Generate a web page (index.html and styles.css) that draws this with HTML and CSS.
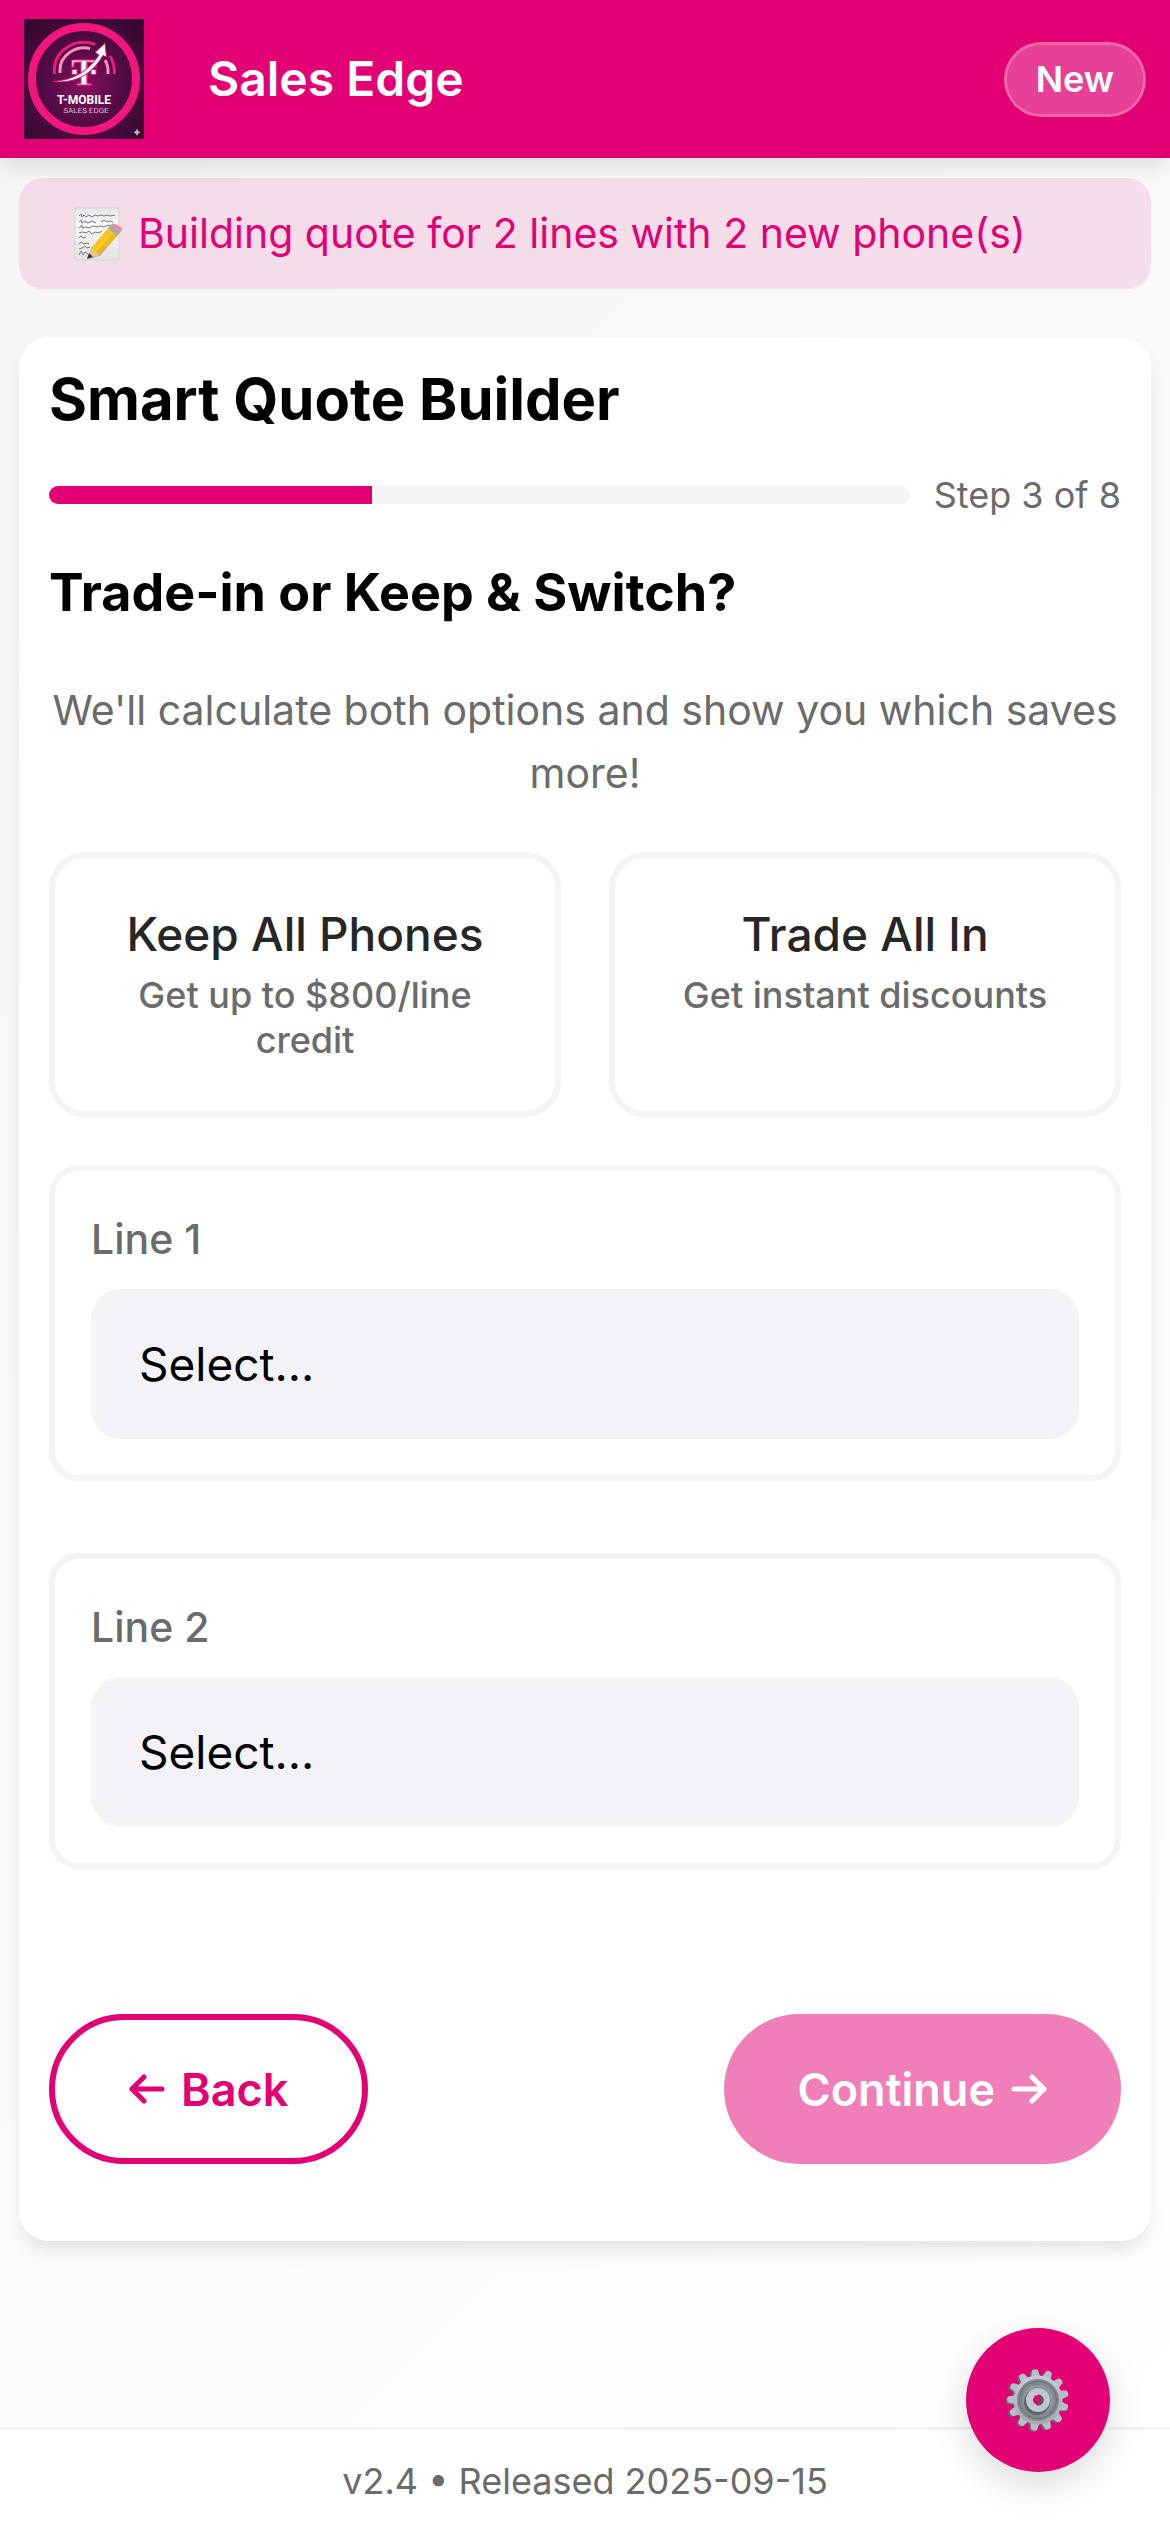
FILE: index.html
```html
<!DOCTYPE html>
<html lang="en">
<head>
<meta charset="utf-8">
<meta name="viewport" content="width=device-width, initial-scale=1">
<title>Sales Edge</title>
<link rel="stylesheet" href="styles.css">
</head>
<body>
<header class="header">
  <svg class="logo" viewBox="0 0 120 120" role="img" aria-label="T-Mobile Sales Edge">
    <defs>
      <radialGradient id="logo-bg" cx="50%" cy="55%" r="65%">
        <stop offset="0" stop-color="#8a0f62"/>
        <stop offset=".45" stop-color="#570b48"/>
        <stop offset="1" stop-color="#35082f"/>
      </radialGradient>
    </defs>
    <rect width="120" height="120" fill="url(#logo-bg)"/>
    <circle cx="60" cy="60" r="52" fill="none" stroke="#f3157e" stroke-width="8"/>
    <path d="M30.500 55V50A29.500 27 0 0 1 71 25.500M86 37Q90.500 44 90.500 55" fill="none" stroke="#e91a7b" stroke-width="3"/>
    <path d="M36 54V51A24.500 22 0 0 1 66 29.500M81 41Q84.500 47 84 55" fill="none" stroke="#ff8fba" stroke-width="3"/>
    <text class="logo-t" x="60" y="66" text-anchor="middle">T</text>
    <path d="M48 50.500h5v5h-5zM67 50.500h5v5h-5z" fill="#fff" stroke="#f3157e"/>
    <path d="M29 62.500C50 61 64 52 75 36L71 33.500L81 24L82.500 38L79 36.500C68 55 52 65 29 62.500Z" fill="#fff" stroke="#d0116f" stroke-width="1"/>
    <text class="logo-name" x="60" y="85" text-anchor="middle">T-MOBILE</text>
    <text class="logo-sub" x="62" y="94" text-anchor="middle">SALES EDGE</text>
    <path d="M113 110.500l1 2 2 .8-2 .9-1 2-1-2-2-.9 2-.8z" fill="#c9a5c0" stroke="#c9a5c0" stroke-width="1"/>
  </svg>
  <h1 class="brand">Sales Edge</h1>
  <button class="new-button" type="button">New</button>
</header>

<main class="main">
  <p class="banner">
    <svg class="memo-icon" viewBox="0 0 50 54" aria-hidden="true">
      <defs>
        <linearGradient id="paper" x1="0" y1="0" x2="0" y2="1"><stop offset="0" stop-color="#e6e6e6"/><stop offset=".3" stop-color="#f8f8f8"/><stop offset="1" stop-color="#e3e3e5"/></linearGradient>
        <linearGradient id="pencil" x1="0" y1="0" x2="1" y2="1"><stop offset="0" stop-color="#ffdb3d"/><stop offset=".5" stop-color="#f7c218"/><stop offset="1" stop-color="#c98a0c"/></linearGradient>
      </defs>
      <rect x="1" y="1" width="44" height="52" fill="url(#paper)" stroke="#d5d3d6"/>
      <g fill="none" stroke="#77777e" stroke-width="1">
        <path d="M5 9l2-2 1 3 2-2 2 2 3-2 3 2 3-2 3 1 3-1 3 1 3-1 3 1 5-1"/>
        <path d="M5 15l2-2 1 3 3-2 3 2 4-2 4 2M27 15l3-2 3 2 3-1 3 1"/>
        <path d="M5 21l3-3v3l3-1 4 1 4-2 4 1 4-1 3 1 5-2 2 2"/>
        <path d="M5 26l3-1 4 1 3-2 3 3 3-2 4 1 3-2"/>
        <path d="M5 31l2-2 2 2 3-1M5 37l2-2 3 2 3-1 2 1M5 42l3-1 3-2 2 2 3-1M5 48l2-4 2 4 2-3 3 2"/>
      </g>
      <path d="M15 52L26 49L49 22L46 20Z" fill="#67656a" opacity=".35"/>
      <path d="M17 41L35 20L44 28L25 48Z" fill="url(#pencil)"/>
      <path d="M21 44L39 24" stroke="#ffe265" stroke-width="1"/>
      <path d="M17 41L25 48L14 51Z" fill="#ebc68b"/>
      <path d="M15 46L19 50L13 52Z" fill="#353237"/>
      <path d="M34 21L37 17.500L46 25L43 29Z" fill="#9faab5"/>
      <path d="M37 17.500C39 14 49 20 47.500 23L46 25Z" fill="#ef8b9b"/>
    </svg>
    <span>Building quote for 2 lines with 2 new phone(s)</span>
  </p>

  <form class="card">
    <h2 class="card-title">Smart Quote Builder</h2>
    <div class="progress">
      <div class="track" role="progressbar" aria-label="Progress" aria-valuemin="0" aria-valuemax="8" aria-valuenow="3"><div class="fill" style="width: 37.5%"></div></div>
      <span class="step">Step 3 of 8</span>
    </div>
    <h3 class="question">Trade-in or Keep &amp; Switch?</h3>
    <p class="intro">We'll calculate both options and show you which saves more!</p>

    <div class="options">
      <button class="option" type="button"><span class="option-title">Keep All Phones</span><span class="option-note">Get up to $800/line credit</span></button>
      <button class="option" type="button"><span class="option-title">Trade All In</span><span class="option-note">Get instant discounts</span></button>
    </div>

    <div class="lines">
      <div class="line">
        <label class="line-label" for="line-1">Line 1</label>
        <select class="select" id="line-1"><option>Select...</option></select>
      </div>
      <div class="line">
        <label class="line-label" for="line-2">Line 2</label>
        <select class="select" id="line-2"><option>Select...</option></select>
      </div>
    </div>

    <div class="actions">
      <button class="action action-back" type="button">
        <svg class="arrow" viewBox="0 0 36 32" aria-hidden="true"><path d="M33 16H3M15 4L3 16L15 28"/></svg>
        Back
      </button>
      <button class="action action-next" type="button" disabled>
        Continue
        <svg class="arrow" viewBox="0 0 36 32" aria-hidden="true"><path d="M3 16H33M21 4L33 16L21 28"/></svg>
      </button>
    </div>
  </form>
</main>

<footer class="footer">v2.4 • Released 2025-09-15</footer>

<button class="settings" type="button" aria-label="Settings">
  <svg class="gear" viewBox="-32 -32 64 64" aria-hidden="true">
    <defs>
      <linearGradient id="steel" x1="0" y1="0" x2="0" y2="1"><stop offset="0" stop-color="#c3ccd4"/><stop offset="1" stop-color="#aaa9b2"/></linearGradient>
      <g id="teeth">
        <path id="tooth" d="M-5 -21L-3 -30Q0 -32 3 -30L5 -21Z"/>
        <use href="#tooth" transform="rotate(27.700)"/><use href="#tooth" transform="rotate(55.400)"/><use href="#tooth" transform="rotate(83.100)"/><use href="#tooth" transform="rotate(110.800)"/><use href="#tooth" transform="rotate(138.500)"/><use href="#tooth" transform="rotate(166.200)"/><use href="#tooth" transform="rotate(193.800)"/><use href="#tooth" transform="rotate(221.500)"/><use href="#tooth" transform="rotate(249.200)"/><use href="#tooth" transform="rotate(276.900)"/><use href="#tooth" transform="rotate(304.600)"/><use href="#tooth" transform="rotate(332.300)"/>
      </g>
    </defs>
    <use href="#teeth" fill="#62666b" transform="translate(-2 1) rotate(-6)"/>
    <use href="#teeth" fill="#b7bec6" transform="rotate(-6)"/>
    <circle r="21.500" fill="none" stroke="url(#steel)" stroke-width="6"/>
    <circle r="15" fill="none" stroke="#80898f" stroke-width="12"/>
    <circle r="18.500" fill="none" stroke="#666f75" stroke-width="1"/>
    <circle r="14" fill="none" stroke="#939ca2" stroke-width="2"/>
    <circle cx="-1" cy="2" r="11" fill="none" stroke="#5c6468" stroke-width="4"/>
    <circle r="8.500" fill="none" stroke="#bec7cf" stroke-width="7"/>
    <path d="M0 -5.500A5.500 5.500 0 1 1 -2 5A7 7 0 0 0 0 -5.500Z" fill="#5d5360"/>
  </svg>
</button>
</body>
</html>
```
FILE: styles.css
```css
:root {
  --magenta: #e20074;
  --grey: #6b6b6b;
  --line: #f4f4f4;
  --shadow: 0 12px 18px -3px rgba(0, 0, 0, .1);
}

* { box-sizing: border-box; }

body {
  margin: 0;
  min-height: 100vh;
  display: flex;
  flex-direction: column;
  background: linear-gradient(135deg, #f5f5f5, #fff);
  color: #000;
  font-family: Inter, "Liberation Sans", sans-serif;
  font-size: 41px;
}

h1, h2, h3, p { margin: 0; }

button, select { font: inherit; }

.header {
  display: flex;
  align-items: center;
  padding: 19px 24px;
  background: var(--magenta);
  color: #fff;
  box-shadow: var(--shadow);
}

.logo { width: 120px; height: 120px; }
.logo-t { font: bold 38px "Liberation Serif", serif; fill: #fff; stroke: #f3157e; stroke-width: 1px; }
.logo-name { font: bold 12px Roboto, sans-serif; fill: #fff; }
.logo-sub { font: 8px Roboto, sans-serif; fill: #d9b8d2; }

.brand {
  margin-left: 64px;
  font-size: 48px;
  line-height: 60px;
  font-weight: 600;
}

.new-button {
  margin-left: auto;
  height: 75px;
  padding: 0 29px;
  border: 3px solid rgba(255, 255, 255, .4);
  border-radius: 38px;
  background: rgba(255, 255, 255, .25);
  background-clip: padding-box;
  color: #fff;
  font-size: 36px;
  font-weight: 600;
}

.main { padding: 20px 19px 0; }

.banner {
  display: flex;
  align-items: center;
  gap: 14px;
  padding: 24px 55px;
  border-radius: 24px;
  background: rgba(226, 0, 116, .1);
  color: var(--magenta);
  line-height: 63px;
}

.memo-icon { width: 50px; height: 54px; }

.card {
  margin-top: 48px;
  padding: 30px 30px 77px;
  border-radius: 30px;
  background: #fff;
  box-shadow: var(--shadow);
}

.card-title {
  font-size: 58px;
  line-height: 64px;
  font-weight: 700;
}

.progress {
  display: flex;
  align-items: center;
  gap: 24px;
  margin-top: 38px;
  color: var(--grey);
  font-size: 36px;
  line-height: 52px;
}

.track {
  flex: 1;
  height: 18px;
  border-radius: 9px;
  overflow: hidden;
  background: var(--line);
}

.fill { height: 100%; background: var(--magenta); }

.question {
  margin-top: 40px;
  font-size: 52px;
  line-height: 64px;
  font-weight: 700;
}

.intro {
  margin-top: 54px;
  color: var(--grey);
  line-height: 63px;
  text-align: center;
}

.options {
  display: grid;
  grid-template-columns: 1fr 1fr;
  gap: 48px;
  margin-top: 47px;
}

.option {
  display: flex;
  flex-direction: column;
  align-items: center;
  gap: 10px;
  min-height: 264px;
  padding: 48px 60px;
  border: 6px solid var(--line);
  border-radius: 36px;
  background: #fff;
  font-weight: 500;
}

.option-title { color: #262626; font-size: 46px; line-height: 57px; }
.option-note { color: var(--grey); font-size: 36px; line-height: 45px; }

.lines {
  display: grid;
  gap: 72px;
  margin-top: 48px;
}

.line {
  display: grid;
  gap: 18px;
  padding: 36px;
  border: 6px solid var(--line);
  border-radius: 30px;
}

.line-label {
  color: var(--grey);
  font-weight: 500;
  line-height: 64px;
}

.select {
  width: 100%;
  height: 150px;
  padding: 0 42px;
  border: 6px solid var(--line);
  border-radius: 30px;
  appearance: none;
  background: #f2f2f7;
  color: #000;
  font-size: 46px;
}

.actions {
  display: flex;
  justify-content: space-between;
  margin-top: 145px;
}

.action {
  display: flex;
  align-items: center;
  justify-content: center;
  gap: 16px;
  height: 150px;
  padding: 0 74px;
  border: 0;
  border-radius: 75px;
  font-size: 45px;
  font-weight: 600;
}

.action-back {
  border: 6px solid var(--magenta);
  background: #fff;
  color: var(--magenta);
}

.action-next {
  background: var(--magenta);
  color: #fff;
}

.action-next:disabled { opacity: .5; }

.arrow {
  width: 36px;
  height: 32px;
  fill: none;
  stroke: currentColor;
  stroke-width: 5px;
  stroke-linecap: round;
  stroke-linejoin: round;
}

.footer {
  margin-top: auto;
  padding: 24px;
  border-top: 3px solid var(--line);
  background: #fff;
  color: var(--grey);
  font-size: 36px;
  line-height: 54px;
  text-align: center;
}

.settings {
  position: fixed;
  right: 60px;
  bottom: 60px;
  display: grid;
  place-items: center;
  width: 144px;
  height: 144px;
  padding: 0;
  border: 0;
  border-radius: 50%;
  background: var(--magenta);
  box-shadow: 0 12px 36px rgba(0, 0, 0, .15);
}

.gear { width: 64px; height: 64px; }
```
